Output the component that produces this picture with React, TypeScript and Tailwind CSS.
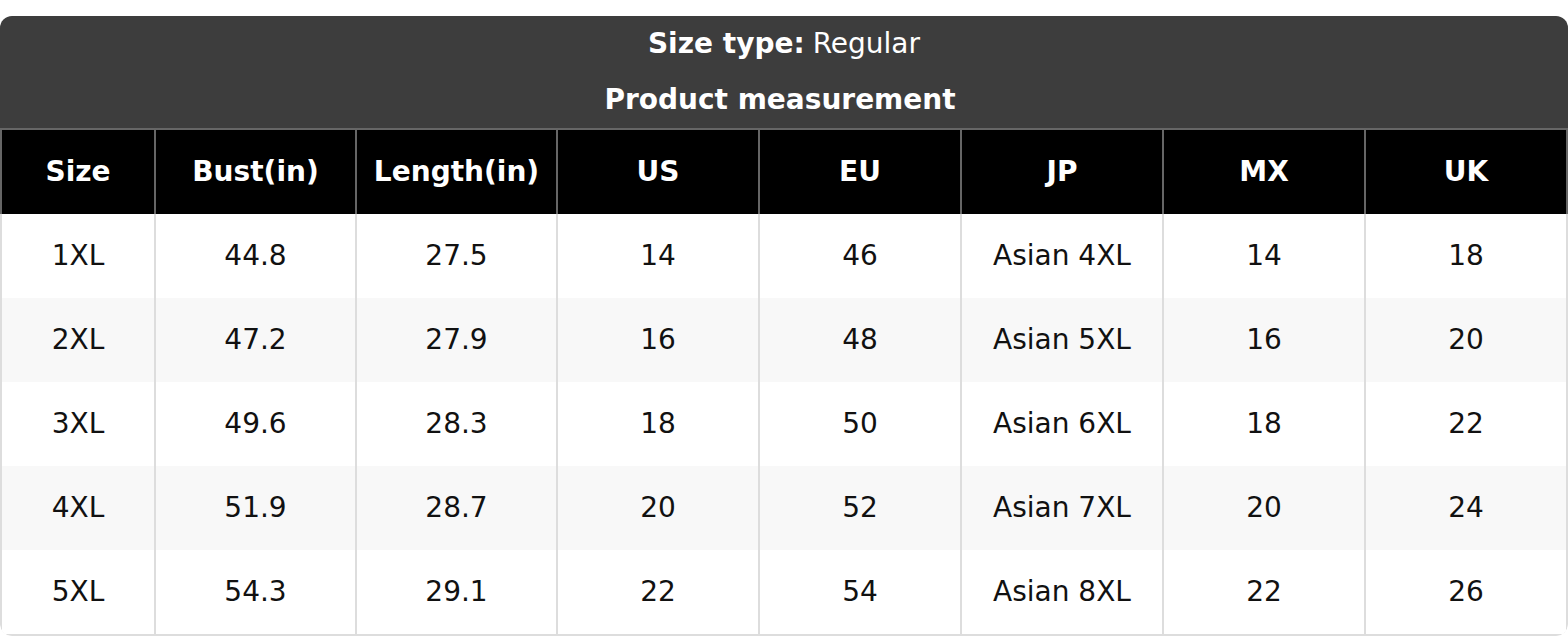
const COLUMNS = ["Size", "Bust(in)", "Length(in)", "US", "EU", "JP", "MX", "UK"];

const ROWS = [
  ["1XL", "44.8", "27.5", "14", "46", "Asian 4XL", "14", "18"],
  ["2XL", "47.2", "27.9", "16", "48", "Asian 5XL", "16", "20"],
  ["3XL", "49.6", "28.3", "18", "50", "Asian 6XL", "18", "22"],
  ["4XL", "51.9", "28.7", "20", "52", "Asian 7XL", "20", "24"],
  ["5XL", "54.3", "29.1", "22", "54", "Asian 8XL", "22", "26"],
];

const GRID = "grid grid-cols-[152px_201px_201px_202px_202px_202px_202px_1fr]";

export default function App() {
  return (
    <div className="min-h-screen bg-white pt-4 font-['DejaVu_Sans',sans-serif] text-[28px]">
      <div className="overflow-hidden rounded-xl">
        <div className="bg-[#3d3d3d] text-white">
          <div className="flex h-[56px] items-center justify-center">
            <span className="font-bold">Size type:</span>
            <span className="ml-2">Regular</span>
          </div>
          <div className="flex h-[56px] items-center justify-center pr-2 font-bold">
            Product measurement
          </div>
        </div>

        <div className={`${GRID} h-[86px] border-x-2 border-t-2 border-[#666] bg-black font-bold text-white`}>
          {COLUMNS.map((col, i) => (
            <div
              key={col}
              className={`flex items-center justify-center ${i > 0 ? "border-l-2 border-[#666]" : ""}`}
            >
              {col}
            </div>
          ))}
        </div>

        <div className="rounded-b-xl border-x-2 border-b-2 border-[#ddd] text-[#111]">
          {ROWS.map((row, r) => (
            <div
              key={row[0]}
              className={`${GRID} h-[84px] ${r % 2 === 1 ? "bg-[#f8f8f8]" : "bg-white"}`}
            >
              {row.map((cell, i) => (
                <div
                  key={i}
                  className={`flex items-center justify-center ${i > 0 ? "border-l-2 border-[#ddd]" : ""}`}
                >
                  {cell}
                </div>
              ))}
            </div>
          ))}
        </div>
      </div>
    </div>
  );
}
